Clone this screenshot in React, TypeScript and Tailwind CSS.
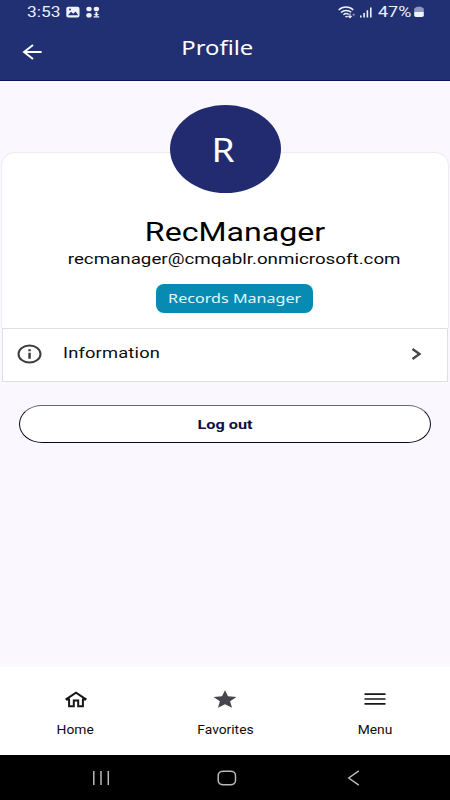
import type { ReactNode } from 'react';

function StatusBar() {
  return (
    <div className="flex h-6 items-center justify-between pl-[27px] pr-[26px] text-[#eceffc]">
      <div className="flex items-center">
        <span className="w-[33px] text-[14px] leading-none">
          <span className="inline-block origin-left scale-x-[1.24]">3:53</span>
        </span>
        <svg className="ml-[6px]" width="14" height="12" viewBox="0 0 14 12">
          <rect x="0.3" y="0.7" width="13.2" height="10.8" rx="2" fill="#eef1ff" />
          <path d="M2 9.2 5 5.8l2.3 1.9L9.6 5.6l2.6 3.6z" fill="#203072" />
          <circle cx="4" cy="3.4" r="1" fill="#203072" />
        </svg>
        <svg className="ml-[6px]" width="14" height="12" viewBox="0 0 14 12" fill="#eef1ff">
          <ellipse cx="3" cy="3" rx="2.7" ry="2.3" />
          <ellipse cx="10.4" cy="3" rx="2.7" ry="2.3" />
          <ellipse cx="3" cy="9.2" rx="2.7" ry="2.3" />
          <path d="M9.5 6h1.8v2h2l-2.9 2.2L7.5 8h2zM7.6 10.2h5.6v1.4H7.6z" />
        </svg>
      </div>
      <div className="flex items-center">
        <svg width="18" height="13" viewBox="0 0 18 13" fill="none" stroke="currentColor">
          <path d="M.7 4.1C4.6.1 11.4.1 15.3 4.1" strokeWidth="1.5" />
          <path d="M3 6.5c3-2.7 7.3-2.7 10.2-.2" strokeWidth="1.5" />
          <path d="M5.4 8.7c1.6-1.4 3.8-1.4 5.3-.2" strokeWidth="1.5" />
          <path d="M7.3 10.6h2.5" strokeWidth="1.4" />
          <path d="M12 7.5v4M10.4 10l1.6 1.6 1.6-1.6" strokeWidth="1.1" />
          <path d="M14.2 8.8h3M15.7 7.4v3" strokeWidth="0.9" opacity="0.45" />
        </svg>
        <svg className="ml-[4px]" width="12" height="12" viewBox="0 0 12 12" fill="currentColor">
          <path d="M0 9.5h1.6v2H0zM3.3 7h1.6v4.5H3.3zM6.6 4.2h1.6v7.3H6.6zM10 1.5h1.6v10H10z" />
        </svg>
        <span className="ml-[6px] w-[34px] text-[14px] leading-none">
          <span className="inline-block origin-left scale-x-[1.28]">47%</span>
        </span>
        <svg className="ml-[2px]" width="10" height="12" viewBox="0 0 10 12">
          <path d="M.2 6V3Q.2 1.6 2 1.4L3 .8h4l1 .6q1.8.2 1.8 1.6v3z" fill="#8f99bf" />
          <path d="M.2 6h9.6v3.6q0 1.4-1.8 1.4H2Q.2 11 .2 9.6z" fill="#f1f3ff" />
        </svg>
      </div>
    </div>
  );
}

function Header() {
  return (
    <header className="h-[81px] border-b border-[#0c1558] bg-[#203072]">
      <StatusBar />
      <div className="grid h-[50px] grid-cols-[60px_1fr_60px] items-center">
        <button className="pl-[22px] pt-[5px]" aria-label="Back">
          <svg width="21" height="16" viewBox="0 0 21 16" fill="none" stroke="#fff" strokeWidth="1.9">
            <path d="M19.6 8H2M11 .9 2 8l9 7.1" />
          </svg>
        </button>
        <h1 className="pb-[2px] pr-[15px] text-center font-['Noto_Sans',sans-serif] text-[20px] leading-none text-white">
          <span className="inline-block scale-x-[1.19]">Profile</span>
        </h1>
      </div>
    </header>
  );
}

function ProfileCard() {
  return (
    <section className="mx-[1px] mt-[71px] flex h-[176px] flex-col items-center rounded-t-[14px] border border-b-0 border-[#ededf1] bg-white">
      <div className="-mt-[48px] flex h-[88px] w-[111px] shrink-0 items-center justify-center rounded-[50%] bg-[#222b70] pr-[4px]">
        <span className="inline-block scale-x-[1.16] pt-[2px] font-['Noto_Sans',sans-serif] text-[32px] leading-none text-white">
          R
        </span>
      </div>
      <div className="flex flex-col items-center pl-[19px]">
        <h2 className="mt-[24px] text-[26px] leading-[30px] text-black">
          <span className="inline-block scale-x-[1.235]">RecManager</span>
        </h2>
        <p className="text-[15px] leading-[24px] text-[#0c0c0c]">
          <span className="inline-block scale-x-[1.25]">recmanager@cmqablr.onmicrosoft.com</span>
        </p>
        <span className="mt-[13px] flex h-[29px] w-[157px] items-center justify-center rounded-[8px] bg-[#078bb2] pb-px font-['Noto_Sans',sans-serif] text-[13px] leading-none text-[#e4f8ff]">
          <span className="inline-block whitespace-nowrap scale-x-[1.24]">Records Manager</span>
        </span>
      </div>
    </section>
  );
}

function InformationRow() {
  return (
    <button className="mx-[2px] flex h-[54px] items-center border border-[#dddfe3] bg-white pl-[14px] pr-[25px]">
      <svg className="mb-[2px]" width="25" height="20" viewBox="0 0 25 20">
        <ellipse cx="12.5" cy="10" rx="11" ry="8.6" fill="none" stroke="#3c3c3f" strokeWidth="2" />
        <path d="M11.3 5.3h2.5v1.9h-2.5zM11.3 8.7h2.5v6h-2.5z" fill="#3c3c3f" />
      </svg>
      <span className="ml-[21px] pb-[3px] text-[15px] tracking-[0.15px] text-[#0c0c0c]">
        <span className="inline-block origin-left scale-x-[1.22]">Information</span>
      </span>
      <svg className="mb-[2px] ml-auto" width="11" height="12" viewBox="0 0 11 12" fill="none" stroke="#454548" strokeWidth="2.3">
        <path d="M1.5 1 8.5 6l-7 5" />
      </svg>
    </button>
  );
}

function NavItem({ label, children }: { label: string; children: ReactNode }) {
  return (
    <button className="flex flex-col items-center pt-[21px]">
      <span className="flex h-[22px] items-center">{children}</span>
      <span className="mt-[12px] inline-block scale-x-[1.15] text-[12px] leading-[17px] text-[#0c0c0c]">{label}</span>
    </button>
  );
}

function BottomNav() {
  return (
    <nav className="grid h-[88px] grid-cols-3 bg-white">
      <NavItem label="Home">
        <svg className="ml-px" width="22" height="17" viewBox="0 0 22 17" fill="none" stroke="#17171a" strokeWidth="2">
          <path d="M.6 8.7 11 1.6l10.4 7.1M1.2 8.4h2.900v6.900h4.700V9.500h4.400v5.800h4.700V8.400h2.900" />
        </svg>
      </NavItem>
      <NavItem label="Favorites">
        <svg width="24" height="18" viewBox="0 0 24 18" fill="#45454d">
          <path d="M12 .2 15 6.2l8.5.7-6.4 4.4 1.9 6.5-7-3.5-7 3.5 1.9-6.5L.5 6.9 9 6.2z" />
        </svg>
      </NavItem>
      <NavItem label="Menu">
        <svg width="22" height="12" viewBox="0 0 22 12" stroke="#17171a" strokeWidth="1.7">
          <path d="M.5 1.2h21M.5 6h21M.5 10.8h21" />
        </svg>
      </NavItem>
    </nav>
  );
}

function SystemNav() {
  return (
    <div className="flex h-[45px] items-center bg-black pl-[92px] text-[#b9b9b9]">
      <svg width="18" height="16" viewBox="0 0 18 16" stroke="currentColor" strokeWidth="1.5">
        <path d="M1.8 1v14M9 1v14M16.3 1v14" />
      </svg>
      <svg className="ml-[107px]" width="20" height="16" viewBox="0 0 20 16" fill="none" stroke="currentColor" strokeWidth="1.5">
        <rect x="1.2" y="1.2" width="17.3" height="13.6" rx="5" ry="4.2" />
      </svg>
      <svg className="ml-[110px]" width="14" height="16" viewBox="0 0 14 16" fill="none" stroke="currentColor" strokeWidth="1.5">
        <path d="M11.8.9 1.8 8l10 7.1" />
      </svg>
    </div>
  );
}

export default function App() {
  return (
    <div className="flex h-[800px] w-[450px] flex-col overflow-hidden bg-[#faf8fe] font-[Roboto,sans-serif]">
      <Header />
      <main className="flex flex-1 flex-col">
        <ProfileCard />
        <InformationRow />
        <button className="ml-[19px] mt-[23px] flex h-[38px] w-[412px] items-center justify-center rounded-[23px/19px] border border-[#07071f] border-t-[#66667a] bg-white pt-px text-[13px] font-bold text-[#0d1048]">
          <span className="inline-block scale-x-[1.25]">Log out</span>
        </button>
      </main>
      <BottomNav />
      <SystemNav />
    </div>
  );
}
